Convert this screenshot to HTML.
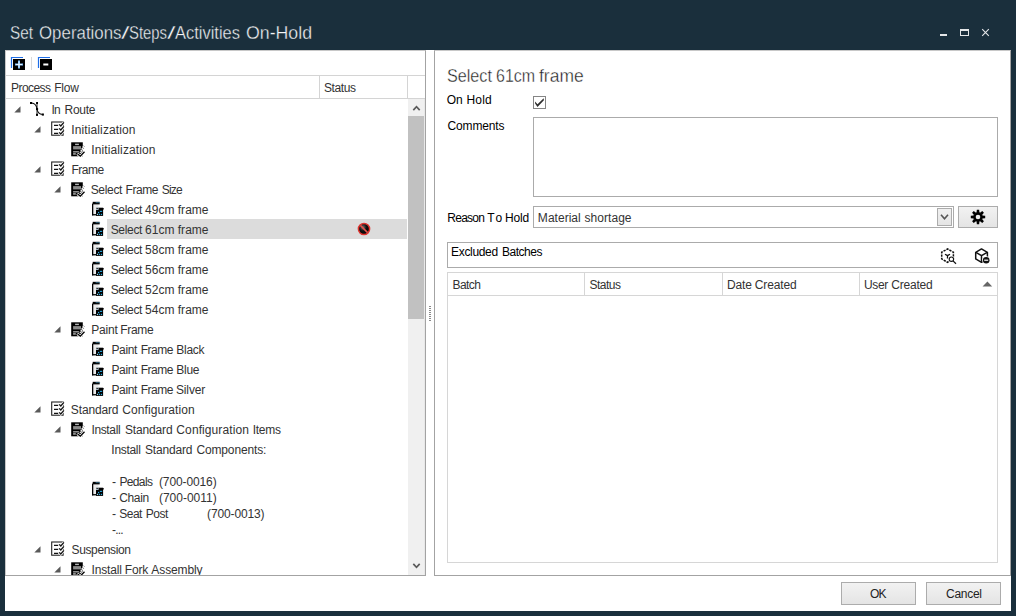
<!DOCTYPE html>
<html><head><meta charset="utf-8"><title>Set Operations/Steps/Activities On-Hold</title>
<style>
html,body{margin:0;padding:0}
body{width:1016px;height:616px;background:#1a2f3c;position:relative;overflow:hidden;font-family:"Liberation Sans", Arial, sans-serif}
.a{position:absolute;box-sizing:border-box}
.t{position:absolute;white-space:pre;font-family:"Liberation Sans", Arial, sans-serif}
.i{position:absolute;overflow:visible}
.g{margin:0;padding:0;height:0;font-size:0;line-height:0}
</style></head><body>
<div class="a" style="left:5px;top:50px;width:1006px;height:561px;background:#fff"></div>
<div class="a" style="left:0;top:0;width:1016px;height:575px;overflow:hidden">
<div class="a" style="left:5px;top:50px;width:421px;height:526px;border:1px solid #a3a3a3;border-top-color:#c8c8c8;border-left-color:#c8c8c8;background:#fff"></div>
<div class="a" style="left:31px;top:57px;width:1px;height:13px;background:#d9d9d9"></div>
<div class="a" style="left:6px;top:75px;width:419px;height:1px;background:#d4d4d4"></div>
<div class="a" style="left:6px;top:98px;width:419px;height:1px;background:#d4d4d4"></div>
<div class="a" style="left:319px;top:76px;width:1px;height:22px;background:#d4d4d4"></div>
<div class="a" style="left:407px;top:76px;width:1px;height:22px;background:#d4d4d4"></div>
<div class="a" style="left:107px;top:219px;width:300px;height:20px;background:#dcdcdc"></div>
<div class="a" style="left:408px;top:99px;width:16px;height:476px;background:#f0f0f0"></div>
<div class="a" style="left:408px;top:116px;width:16px;height:203px;background:#c1c1c1"></div>
<div class="a" style="left:424px;top:99px;width:1px;height:476px;background:#e8e8e8"></div>
<div class="a" style="left:429px;top:306px;width:2px;height:1px;background:#8a8a8a"></div>
<div class="a" style="left:429px;top:308px;width:2px;height:1px;background:#8a8a8a"></div>
<div class="a" style="left:429px;top:310px;width:2px;height:1px;background:#8a8a8a"></div>
<div class="a" style="left:429px;top:312px;width:2px;height:1px;background:#8a8a8a"></div>
<div class="a" style="left:429px;top:314px;width:2px;height:1px;background:#8a8a8a"></div>
<div class="a" style="left:429px;top:316px;width:2px;height:1px;background:#8a8a8a"></div>
<div class="a" style="left:429px;top:318px;width:2px;height:1px;background:#8a8a8a"></div>
<div class="a" style="left:429px;top:320px;width:2px;height:1px;background:#8a8a8a"></div>
<div class="a" style="left:434px;top:50px;width:577px;height:526px;border:1px solid #a3a3a3;border-top-color:#c8c8c8;background:#fff"></div>
<div class="a" style="left:533px;top:96px;width:13px;height:13px;border:1px solid #858585;background:#fff"></div>
<div class="a" style="left:533px;top:117px;width:465px;height:80px;border:1px solid #ababab;background:#fff"></div>
<div class="a" style="left:533px;top:206px;width:421px;height:22px;border:1px solid #ababab;background:#fff"></div>
<div class="a" style="left:937px;top:208px;width:15px;height:18px;border:1px solid #acacac;background:linear-gradient(#f0f0f0,#e5e5e5)"></div>
<div class="a" style="left:958px;top:206px;width:40px;height:22px;border:1px solid #acacac;background:linear-gradient(#f2f2f2,#e4e4e4)"></div>
<div class="a" style="left:447px;top:242px;width:551px;height:26px;border:1px solid #ababab;background:#fff"></div>
<div class="a" style="left:447px;top:272px;width:551px;height:291px;border:1px solid #d6d6d6;background:#fff"></div>
<div class="a" style="left:448px;top:295px;width:549px;height:1px;background:#d6d6d6"></div>
<div class="a" style="left:584px;top:273px;width:1px;height:22px;background:#d6d6d6"></div>
<div class="a" style="left:722px;top:273px;width:1px;height:22px;background:#d6d6d6"></div>
<div class="a" style="left:859px;top:273px;width:1px;height:22px;background:#d6d6d6"></div>
<div class="a" style="left:940px;top:34px;width:7px;height:2px;background:#e4e6e8"></div>
<div class="a" style="left:960px;top:29px;width:9px;height:7px;border:1px solid #e4e6e8;border-top-width:2px"></div>
<svg class="i" style="left:13.7px;top:105.6px" width="7" height="7" viewBox="0 0 7 7"><path d="M6.5 0.3V6.5H0.3Z" fill="#595959"/></svg>
<svg class="i" style="left:30px;top:102px" width="14" height="14" viewBox="0 0 14 14"><g fill="none" stroke="#111" stroke-width="1.15"><path d="M1.5 1C4.6 1.3 6.6 3.6 7 7"/><path d="M7 1V13" stroke-width="0.9"/><path d="M7 7C7.4 10.2 9.6 12.2 12.6 12.5"/></g><g fill="#000"><rect x="0" y="0" width="2.1" height="2"/><rect x="6.1" y="0" width="1.9" height="2"/><rect x="6" y="6.1" width="2.1" height="1.9"/><rect x="6" y="11.8" width="2" height="2.1"/><rect x="11.8" y="11.5" width="2.1" height="2.1"/></g></svg>
<svg class="i" style="left:33.7px;top:125.6px" width="7" height="7" viewBox="0 0 7 7"><path d="M6.5 0.3V6.5H0.3Z" fill="#595959"/></svg>
<svg class="i" style="left:50.5px;top:120.6px" width="14" height="15" viewBox="0 -0.5 14 15"><rect x="0.7" y="0.5" width="11.4" height="13.2" fill="#fff" stroke="#222" stroke-width="1.1"/><g stroke="#111" stroke-width="1.1" fill="none"><path d="M3 3.9H7.3M3 7.9H7.3M3 11.9H7.3"/></g><g stroke="#fff" stroke-width="2.6" fill="none"><path d="M8.2 2.9L9.8 4.5L12.9 0.8M8.2 6.9L9.8 8.5L12.9 4.8M8.2 10.9L9.8 12.5L12.9 8.8"/></g><g stroke="#111" stroke-width="1.3" fill="none"><path d="M8.2 2.9L9.8 4.5L12.9 0.8M8.2 6.9L9.8 8.5L12.9 4.8M8.2 10.9L9.8 12.5L12.9 8.8"/></g></svg>
<svg class="i" style="left:71px;top:141.5px" width="14" height="15" viewBox="0 0 14 15"><rect x="0.2" y="0.3" width="11.6" height="14" fill="#000"/><rect x="4.1" y="1.7" width="3.8" height="1.4" fill="#b5b5b5"/><rect x="2.1" y="4.1" width="7.9" height="3.3" fill="#8a8a8a"/><rect x="2.1" y="9.3" width="5.8" height="1.1" fill="#cfcfcf"/><rect x="2.1" y="11.4" width="2.7" height="1.1" fill="#f0f0f0"/><path d="M13.1 4L9.4 10.9" stroke="#fff" stroke-width="2.2" fill="none"/><path d="M13.1 4L9.4 10.9" stroke="#000" stroke-width="2.2" fill="none" stroke-dasharray="0.7 1.5" stroke-dashoffset="0.3" opacity="0.75"/><path d="M6.3 11.7L9.3 14.3L13.9 9.4" stroke="#fff" stroke-width="2.8" fill="none"/><path d="M6.6 12L9.3 14.1L13.5 9.8" stroke="#000" stroke-width="1.3" fill="none"/></svg>
<svg class="i" style="left:33.7px;top:165.6px" width="7" height="7" viewBox="0 0 7 7"><path d="M6.5 0.3V6.5H0.3Z" fill="#595959"/></svg>
<svg class="i" style="left:50.5px;top:160.6px" width="14" height="15" viewBox="0 -0.5 14 15"><rect x="0.7" y="0.5" width="11.4" height="13.2" fill="#fff" stroke="#222" stroke-width="1.1"/><g stroke="#111" stroke-width="1.1" fill="none"><path d="M3 3.9H7.3M3 7.9H7.3M3 11.9H7.3"/></g><g stroke="#fff" stroke-width="2.6" fill="none"><path d="M8.2 2.9L9.8 4.5L12.9 0.8M8.2 6.9L9.8 8.5L12.9 4.8M8.2 10.9L9.8 12.5L12.9 8.8"/></g><g stroke="#111" stroke-width="1.3" fill="none"><path d="M8.2 2.9L9.8 4.5L12.9 0.8M8.2 6.9L9.8 8.5L12.9 4.8M8.2 10.9L9.8 12.5L12.9 8.8"/></g></svg>
<svg class="i" style="left:53.7px;top:185.6px" width="7" height="7" viewBox="0 0 7 7"><path d="M6.5 0.3V6.5H0.3Z" fill="#595959"/></svg>
<svg class="i" style="left:71px;top:181.5px" width="14" height="15" viewBox="0 0 14 15"><rect x="0.2" y="0.3" width="11.6" height="14" fill="#000"/><rect x="4.1" y="1.7" width="3.8" height="1.4" fill="#b5b5b5"/><rect x="2.1" y="4.1" width="7.9" height="3.3" fill="#8a8a8a"/><rect x="2.1" y="9.3" width="5.8" height="1.1" fill="#cfcfcf"/><rect x="2.1" y="11.4" width="2.7" height="1.1" fill="#f0f0f0"/><path d="M13.1 4L9.4 10.9" stroke="#fff" stroke-width="2.2" fill="none"/><path d="M13.1 4L9.4 10.9" stroke="#000" stroke-width="2.2" fill="none" stroke-dasharray="0.7 1.5" stroke-dashoffset="0.3" opacity="0.75"/><path d="M6.3 11.7L9.3 14.3L13.9 9.4" stroke="#fff" stroke-width="2.8" fill="none"/><path d="M6.6 12L9.3 14.1L13.5 9.8" stroke="#000" stroke-width="1.3" fill="none"/></svg>
<svg class="i" style="left:92px;top:201px" width="13" height="15" viewBox="0 0 13 15"><rect x="1.2" y="3.4" width="5.2" height="9.8" fill="#e9e9e9"/><rect x="0" y="2.6" width="1.3" height="11.8" fill="#000"/><rect x="0" y="13.1" width="4.5" height="1.3" fill="#000"/><rect x="0.7" y="0.8" width="7" height="2.6" fill="#000"/><rect x="3.6" y="1.2" width="4.6" height="0.9" fill="#5bbce8" opacity="0.55"/><rect x="4" y="6.7" width="7.1" height="8.2" fill="#000"/><rect x="4" y="6.6" width="2.6" height="2.2" fill="#d8ecf7"/><rect x="4.3" y="7.2" width="2" height="0.8" fill="#000"/><path d="M9.8 8.2L11.9 6.9V8.6Z" fill="#000"/><rect x="7.9" y="9.8" width="2.3" height="1.1" fill="#29abe2"/><rect x="6" y="10.9" width="1.2" height="1.2" fill="#29abe2"/><rect x="4.9" y="12.8" width="1.2" height="1.2" fill="#9ad8f3"/><rect x="6.9" y="12.8" width="1.2" height="1.2" fill="#29abe2"/><rect x="8.9" y="12.8" width="1.2" height="1.2" fill="#29abe2"/></svg>
<svg class="i" style="left:92px;top:221px" width="13" height="15" viewBox="0 0 13 15"><rect x="1.2" y="3.4" width="5.2" height="9.8" fill="#e9e9e9"/><rect x="0" y="2.6" width="1.3" height="11.8" fill="#000"/><rect x="0" y="13.1" width="4.5" height="1.3" fill="#000"/><rect x="0.7" y="0.8" width="7" height="2.6" fill="#000"/><rect x="3.6" y="1.2" width="4.6" height="0.9" fill="#5bbce8" opacity="0.55"/><rect x="4" y="6.7" width="7.1" height="8.2" fill="#000"/><rect x="4" y="6.6" width="2.6" height="2.2" fill="#d8ecf7"/><rect x="4.3" y="7.2" width="2" height="0.8" fill="#000"/><path d="M9.8 8.2L11.9 6.9V8.6Z" fill="#000"/><rect x="7.9" y="9.8" width="2.3" height="1.1" fill="#29abe2"/><rect x="6" y="10.9" width="1.2" height="1.2" fill="#29abe2"/><rect x="4.9" y="12.8" width="1.2" height="1.2" fill="#9ad8f3"/><rect x="6.9" y="12.8" width="1.2" height="1.2" fill="#29abe2"/><rect x="8.9" y="12.8" width="1.2" height="1.2" fill="#29abe2"/></svg>
<svg class="i" style="left:92px;top:241px" width="13" height="15" viewBox="0 0 13 15"><rect x="1.2" y="3.4" width="5.2" height="9.8" fill="#e9e9e9"/><rect x="0" y="2.6" width="1.3" height="11.8" fill="#000"/><rect x="0" y="13.1" width="4.5" height="1.3" fill="#000"/><rect x="0.7" y="0.8" width="7" height="2.6" fill="#000"/><rect x="3.6" y="1.2" width="4.6" height="0.9" fill="#5bbce8" opacity="0.55"/><rect x="4" y="6.7" width="7.1" height="8.2" fill="#000"/><rect x="4" y="6.6" width="2.6" height="2.2" fill="#d8ecf7"/><rect x="4.3" y="7.2" width="2" height="0.8" fill="#000"/><path d="M9.8 8.2L11.9 6.9V8.6Z" fill="#000"/><rect x="7.9" y="9.8" width="2.3" height="1.1" fill="#29abe2"/><rect x="6" y="10.9" width="1.2" height="1.2" fill="#29abe2"/><rect x="4.9" y="12.8" width="1.2" height="1.2" fill="#9ad8f3"/><rect x="6.9" y="12.8" width="1.2" height="1.2" fill="#29abe2"/><rect x="8.9" y="12.8" width="1.2" height="1.2" fill="#29abe2"/></svg>
<svg class="i" style="left:92px;top:261px" width="13" height="15" viewBox="0 0 13 15"><rect x="1.2" y="3.4" width="5.2" height="9.8" fill="#e9e9e9"/><rect x="0" y="2.6" width="1.3" height="11.8" fill="#000"/><rect x="0" y="13.1" width="4.5" height="1.3" fill="#000"/><rect x="0.7" y="0.8" width="7" height="2.6" fill="#000"/><rect x="3.6" y="1.2" width="4.6" height="0.9" fill="#5bbce8" opacity="0.55"/><rect x="4" y="6.7" width="7.1" height="8.2" fill="#000"/><rect x="4" y="6.6" width="2.6" height="2.2" fill="#d8ecf7"/><rect x="4.3" y="7.2" width="2" height="0.8" fill="#000"/><path d="M9.8 8.2L11.9 6.9V8.6Z" fill="#000"/><rect x="7.9" y="9.8" width="2.3" height="1.1" fill="#29abe2"/><rect x="6" y="10.9" width="1.2" height="1.2" fill="#29abe2"/><rect x="4.9" y="12.8" width="1.2" height="1.2" fill="#9ad8f3"/><rect x="6.9" y="12.8" width="1.2" height="1.2" fill="#29abe2"/><rect x="8.9" y="12.8" width="1.2" height="1.2" fill="#29abe2"/></svg>
<svg class="i" style="left:92px;top:281px" width="13" height="15" viewBox="0 0 13 15"><rect x="1.2" y="3.4" width="5.2" height="9.8" fill="#e9e9e9"/><rect x="0" y="2.6" width="1.3" height="11.8" fill="#000"/><rect x="0" y="13.1" width="4.5" height="1.3" fill="#000"/><rect x="0.7" y="0.8" width="7" height="2.6" fill="#000"/><rect x="3.6" y="1.2" width="4.6" height="0.9" fill="#5bbce8" opacity="0.55"/><rect x="4" y="6.7" width="7.1" height="8.2" fill="#000"/><rect x="4" y="6.6" width="2.6" height="2.2" fill="#d8ecf7"/><rect x="4.3" y="7.2" width="2" height="0.8" fill="#000"/><path d="M9.8 8.2L11.9 6.9V8.6Z" fill="#000"/><rect x="7.9" y="9.8" width="2.3" height="1.1" fill="#29abe2"/><rect x="6" y="10.9" width="1.2" height="1.2" fill="#29abe2"/><rect x="4.9" y="12.8" width="1.2" height="1.2" fill="#9ad8f3"/><rect x="6.9" y="12.8" width="1.2" height="1.2" fill="#29abe2"/><rect x="8.9" y="12.8" width="1.2" height="1.2" fill="#29abe2"/></svg>
<svg class="i" style="left:92px;top:301px" width="13" height="15" viewBox="0 0 13 15"><rect x="1.2" y="3.4" width="5.2" height="9.8" fill="#e9e9e9"/><rect x="0" y="2.6" width="1.3" height="11.8" fill="#000"/><rect x="0" y="13.1" width="4.5" height="1.3" fill="#000"/><rect x="0.7" y="0.8" width="7" height="2.6" fill="#000"/><rect x="3.6" y="1.2" width="4.6" height="0.9" fill="#5bbce8" opacity="0.55"/><rect x="4" y="6.7" width="7.1" height="8.2" fill="#000"/><rect x="4" y="6.6" width="2.6" height="2.2" fill="#d8ecf7"/><rect x="4.3" y="7.2" width="2" height="0.8" fill="#000"/><path d="M9.8 8.2L11.9 6.9V8.6Z" fill="#000"/><rect x="7.9" y="9.8" width="2.3" height="1.1" fill="#29abe2"/><rect x="6" y="10.9" width="1.2" height="1.2" fill="#29abe2"/><rect x="4.9" y="12.8" width="1.2" height="1.2" fill="#9ad8f3"/><rect x="6.9" y="12.8" width="1.2" height="1.2" fill="#29abe2"/><rect x="8.9" y="12.8" width="1.2" height="1.2" fill="#29abe2"/></svg>
<svg class="i" style="left:53.7px;top:325.6px" width="7" height="7" viewBox="0 0 7 7"><path d="M6.5 0.3V6.5H0.3Z" fill="#595959"/></svg>
<svg class="i" style="left:71px;top:321.5px" width="14" height="15" viewBox="0 0 14 15"><rect x="0.2" y="0.3" width="11.6" height="14" fill="#000"/><rect x="4.1" y="1.7" width="3.8" height="1.4" fill="#b5b5b5"/><rect x="2.1" y="4.1" width="7.9" height="3.3" fill="#8a8a8a"/><rect x="2.1" y="9.3" width="5.8" height="1.1" fill="#cfcfcf"/><rect x="2.1" y="11.4" width="2.7" height="1.1" fill="#f0f0f0"/><path d="M13.1 4L9.4 10.9" stroke="#fff" stroke-width="2.2" fill="none"/><path d="M13.1 4L9.4 10.9" stroke="#000" stroke-width="2.2" fill="none" stroke-dasharray="0.7 1.5" stroke-dashoffset="0.3" opacity="0.75"/><path d="M6.3 11.7L9.3 14.3L13.9 9.4" stroke="#fff" stroke-width="2.8" fill="none"/><path d="M6.6 12L9.3 14.1L13.5 9.8" stroke="#000" stroke-width="1.3" fill="none"/></svg>
<svg class="i" style="left:92px;top:341px" width="13" height="15" viewBox="0 0 13 15"><rect x="1.2" y="3.4" width="5.2" height="9.8" fill="#e9e9e9"/><rect x="0" y="2.6" width="1.3" height="11.8" fill="#000"/><rect x="0" y="13.1" width="4.5" height="1.3" fill="#000"/><rect x="0.7" y="0.8" width="7" height="2.6" fill="#000"/><rect x="3.6" y="1.2" width="4.6" height="0.9" fill="#5bbce8" opacity="0.55"/><rect x="4" y="6.7" width="7.1" height="8.2" fill="#000"/><rect x="4" y="6.6" width="2.6" height="2.2" fill="#d8ecf7"/><rect x="4.3" y="7.2" width="2" height="0.8" fill="#000"/><path d="M9.8 8.2L11.9 6.9V8.6Z" fill="#000"/><rect x="7.9" y="9.8" width="2.3" height="1.1" fill="#29abe2"/><rect x="6" y="10.9" width="1.2" height="1.2" fill="#29abe2"/><rect x="4.9" y="12.8" width="1.2" height="1.2" fill="#9ad8f3"/><rect x="6.9" y="12.8" width="1.2" height="1.2" fill="#29abe2"/><rect x="8.9" y="12.8" width="1.2" height="1.2" fill="#29abe2"/></svg>
<svg class="i" style="left:92px;top:361px" width="13" height="15" viewBox="0 0 13 15"><rect x="1.2" y="3.4" width="5.2" height="9.8" fill="#e9e9e9"/><rect x="0" y="2.6" width="1.3" height="11.8" fill="#000"/><rect x="0" y="13.1" width="4.5" height="1.3" fill="#000"/><rect x="0.7" y="0.8" width="7" height="2.6" fill="#000"/><rect x="3.6" y="1.2" width="4.6" height="0.9" fill="#5bbce8" opacity="0.55"/><rect x="4" y="6.7" width="7.1" height="8.2" fill="#000"/><rect x="4" y="6.6" width="2.6" height="2.2" fill="#d8ecf7"/><rect x="4.3" y="7.2" width="2" height="0.8" fill="#000"/><path d="M9.8 8.2L11.9 6.9V8.6Z" fill="#000"/><rect x="7.9" y="9.8" width="2.3" height="1.1" fill="#29abe2"/><rect x="6" y="10.9" width="1.2" height="1.2" fill="#29abe2"/><rect x="4.9" y="12.8" width="1.2" height="1.2" fill="#9ad8f3"/><rect x="6.9" y="12.8" width="1.2" height="1.2" fill="#29abe2"/><rect x="8.9" y="12.8" width="1.2" height="1.2" fill="#29abe2"/></svg>
<svg class="i" style="left:92px;top:381px" width="13" height="15" viewBox="0 0 13 15"><rect x="1.2" y="3.4" width="5.2" height="9.8" fill="#e9e9e9"/><rect x="0" y="2.6" width="1.3" height="11.8" fill="#000"/><rect x="0" y="13.1" width="4.5" height="1.3" fill="#000"/><rect x="0.7" y="0.8" width="7" height="2.6" fill="#000"/><rect x="3.6" y="1.2" width="4.6" height="0.9" fill="#5bbce8" opacity="0.55"/><rect x="4" y="6.7" width="7.1" height="8.2" fill="#000"/><rect x="4" y="6.6" width="2.6" height="2.2" fill="#d8ecf7"/><rect x="4.3" y="7.2" width="2" height="0.8" fill="#000"/><path d="M9.8 8.2L11.9 6.9V8.6Z" fill="#000"/><rect x="7.9" y="9.8" width="2.3" height="1.1" fill="#29abe2"/><rect x="6" y="10.9" width="1.2" height="1.2" fill="#29abe2"/><rect x="4.9" y="12.8" width="1.2" height="1.2" fill="#9ad8f3"/><rect x="6.9" y="12.8" width="1.2" height="1.2" fill="#29abe2"/><rect x="8.9" y="12.8" width="1.2" height="1.2" fill="#29abe2"/></svg>
<svg class="i" style="left:33.7px;top:405.6px" width="7" height="7" viewBox="0 0 7 7"><path d="M6.5 0.3V6.5H0.3Z" fill="#595959"/></svg>
<svg class="i" style="left:50.5px;top:400.6px" width="14" height="15" viewBox="0 -0.5 14 15"><rect x="0.7" y="0.5" width="11.4" height="13.2" fill="#fff" stroke="#222" stroke-width="1.1"/><g stroke="#111" stroke-width="1.1" fill="none"><path d="M3 3.9H7.3M3 7.9H7.3M3 11.9H7.3"/></g><g stroke="#fff" stroke-width="2.6" fill="none"><path d="M8.2 2.9L9.8 4.5L12.9 0.8M8.2 6.9L9.8 8.5L12.9 4.8M8.2 10.9L9.8 12.5L12.9 8.8"/></g><g stroke="#111" stroke-width="1.3" fill="none"><path d="M8.2 2.9L9.8 4.5L12.9 0.8M8.2 6.9L9.8 8.5L12.9 4.8M8.2 10.9L9.8 12.5L12.9 8.8"/></g></svg>
<svg class="i" style="left:53.7px;top:425.6px" width="7" height="7" viewBox="0 0 7 7"><path d="M6.5 0.3V6.5H0.3Z" fill="#595959"/></svg>
<svg class="i" style="left:71px;top:421.5px" width="14" height="15" viewBox="0 0 14 15"><rect x="0.2" y="0.3" width="11.6" height="14" fill="#000"/><rect x="4.1" y="1.7" width="3.8" height="1.4" fill="#b5b5b5"/><rect x="2.1" y="4.1" width="7.9" height="3.3" fill="#8a8a8a"/><rect x="2.1" y="9.3" width="5.8" height="1.1" fill="#cfcfcf"/><rect x="2.1" y="11.4" width="2.7" height="1.1" fill="#f0f0f0"/><path d="M13.1 4L9.4 10.9" stroke="#fff" stroke-width="2.2" fill="none"/><path d="M13.1 4L9.4 10.9" stroke="#000" stroke-width="2.2" fill="none" stroke-dasharray="0.7 1.5" stroke-dashoffset="0.3" opacity="0.75"/><path d="M6.3 11.7L9.3 14.3L13.9 9.4" stroke="#fff" stroke-width="2.8" fill="none"/><path d="M6.6 12L9.3 14.1L13.5 9.8" stroke="#000" stroke-width="1.3" fill="none"/></svg>
<svg class="i" style="left:92px;top:481px" width="13" height="15" viewBox="0 0 13 15"><rect x="1.2" y="3.4" width="5.2" height="9.8" fill="#e9e9e9"/><rect x="0" y="2.6" width="1.3" height="11.8" fill="#000"/><rect x="0" y="13.1" width="4.5" height="1.3" fill="#000"/><rect x="0.7" y="0.8" width="7" height="2.6" fill="#000"/><rect x="3.6" y="1.2" width="4.6" height="0.9" fill="#5bbce8" opacity="0.55"/><rect x="4" y="6.7" width="7.1" height="8.2" fill="#000"/><rect x="4" y="6.6" width="2.6" height="2.2" fill="#d8ecf7"/><rect x="4.3" y="7.2" width="2" height="0.8" fill="#000"/><path d="M9.8 8.2L11.9 6.9V8.6Z" fill="#000"/><rect x="7.9" y="9.8" width="2.3" height="1.1" fill="#29abe2"/><rect x="6" y="10.9" width="1.2" height="1.2" fill="#29abe2"/><rect x="4.9" y="12.8" width="1.2" height="1.2" fill="#9ad8f3"/><rect x="6.9" y="12.8" width="1.2" height="1.2" fill="#29abe2"/><rect x="8.9" y="12.8" width="1.2" height="1.2" fill="#29abe2"/></svg>
<svg class="i" style="left:33.7px;top:545.6px" width="7" height="7" viewBox="0 0 7 7"><path d="M6.5 0.3V6.5H0.3Z" fill="#595959"/></svg>
<svg class="i" style="left:50.5px;top:540.6px" width="14" height="15" viewBox="0 -0.5 14 15"><rect x="0.7" y="0.5" width="11.4" height="13.2" fill="#fff" stroke="#222" stroke-width="1.1"/><g stroke="#111" stroke-width="1.1" fill="none"><path d="M3 3.9H7.3M3 7.9H7.3M3 11.9H7.3"/></g><g stroke="#fff" stroke-width="2.6" fill="none"><path d="M8.2 2.9L9.8 4.5L12.9 0.8M8.2 6.9L9.8 8.5L12.9 4.8M8.2 10.9L9.8 12.5L12.9 8.8"/></g><g stroke="#111" stroke-width="1.3" fill="none"><path d="M8.2 2.9L9.8 4.5L12.9 0.8M8.2 6.9L9.8 8.5L12.9 4.8M8.2 10.9L9.8 12.5L12.9 8.8"/></g></svg>
<svg class="i" style="left:53.7px;top:565.6px" width="7" height="7" viewBox="0 0 7 7"><path d="M6.5 0.3V6.5H0.3Z" fill="#595959"/></svg>
<svg class="i" style="left:71px;top:561.5px" width="14" height="15" viewBox="0 0 14 15"><rect x="0.2" y="0.3" width="11.6" height="14" fill="#000"/><rect x="4.1" y="1.7" width="3.8" height="1.4" fill="#b5b5b5"/><rect x="2.1" y="4.1" width="7.9" height="3.3" fill="#8a8a8a"/><rect x="2.1" y="9.3" width="5.8" height="1.1" fill="#cfcfcf"/><rect x="2.1" y="11.4" width="2.7" height="1.1" fill="#f0f0f0"/><path d="M13.1 4L9.4 10.9" stroke="#fff" stroke-width="2.2" fill="none"/><path d="M13.1 4L9.4 10.9" stroke="#000" stroke-width="2.2" fill="none" stroke-dasharray="0.7 1.5" stroke-dashoffset="0.3" opacity="0.75"/><path d="M6.3 11.7L9.3 14.3L13.9 9.4" stroke="#fff" stroke-width="2.8" fill="none"/><path d="M6.6 12L9.3 14.1L13.5 9.8" stroke="#000" stroke-width="1.3" fill="none"/></svg>
<svg class="i" style="left:356.5px;top:222px" width="14" height="14" viewBox="0 0 14 14"><defs><radialGradient id="rg" cx="0.4" cy="0.35" r="0.7"><stop offset="0" stop-color="#777"/><stop offset="0.45" stop-color="#111"/><stop offset="1" stop-color="#000"/></radialGradient></defs><circle cx="7" cy="7" r="5.6" fill="url(#rg)" stroke="#e0342f" stroke-width="1.5"/><path d="M3.4 3.4L10.6 10.6" stroke="#e8534c" stroke-width="1.5"/></svg>
<svg class="i" style="left:11px;top:57px" width="14" height="13" viewBox="0 0 14 13"><path d="M0.5 11V0.5H12" stroke="#1e6ee8" stroke-width="1.2" fill="none"/><rect x="2" y="2" width="12" height="11" fill="#000"/><path d="M4 7.5H12M8 3.6V11.4" stroke="#7fc0ff" stroke-width="2"/><path d="M5 7.5H11M8 4.6V10.4" stroke="#e6f3ff" stroke-width="1"/></svg>
<svg class="i" style="left:38px;top:57px" width="14" height="13" viewBox="0 0 14 13"><path d="M0.5 11V0.5H12" stroke="#1e6ee8" stroke-width="1.2" fill="none"/><rect x="2" y="2" width="12" height="11" fill="#000"/><rect x="5.3" y="6.5" width="5" height="2" fill="#fff"/></svg>
<svg class="i" style="left:969.9px;top:208.9px" width="16" height="16" viewBox="0 0 16 16"><g transform="translate(8 8)" fill="#000"><path d="M-1.5 -4L-1.15 -7.2H1.15L1.5 -4Z" transform="rotate(0)"/><path d="M-1.5 -4L-1.15 -7.2H1.15L1.5 -4Z" transform="rotate(45)"/><path d="M-1.5 -4L-1.15 -7.2H1.15L1.5 -4Z" transform="rotate(90)"/><path d="M-1.5 -4L-1.15 -7.2H1.15L1.5 -4Z" transform="rotate(135)"/><path d="M-1.5 -4L-1.15 -7.2H1.15L1.5 -4Z" transform="rotate(180)"/><path d="M-1.5 -4L-1.15 -7.2H1.15L1.5 -4Z" transform="rotate(225)"/><path d="M-1.5 -4L-1.15 -7.2H1.15L1.5 -4Z" transform="rotate(270)"/><path d="M-1.5 -4L-1.15 -7.2H1.15L1.5 -4Z" transform="rotate(315)"/><circle r="4.7"/><circle r="2.3" fill="#ebebeb"/></g></svg>
<svg class="i" style="left:941px;top:247.8px" width="16" height="17" viewBox="0 0 16 17"><g fill="none" stroke="#111" stroke-width="1.5"><path d="M6.5 0.9L12.4 4.3V10.9L6.5 14.3L0.7 10.9V4.3Z" stroke-dasharray="2.35 1" stroke-dashoffset="1.17"/><path d="M6.5 7.6V10.6M6.5 7.6L4 6.2M6.5 7.6L9 6.2" stroke-width="1.3"/></g><circle cx="10.4" cy="11.2" r="3.1" fill="#fff"/><circle cx="10.4" cy="11.2" r="2.2" fill="#fff" stroke="#111" stroke-width="1.1"/><path d="M12 12.9L15 15.8" stroke="#111" stroke-width="1.3"/></svg>
<svg class="i" style="left:975.2px;top:247.8px" width="16" height="17" viewBox="0 0 16 17"><g fill="none" stroke="#111" stroke-width="1.5" stroke-linejoin="round"><path d="M6.5 0.9L12.4 4.3V10.9L6.5 14.3L0.7 10.9V4.3Z"/><path d="M6.5 7.6V14.3M6.5 7.6L0.9 4.4M6.5 7.6L12.2 4.4"/></g><circle cx="11.2" cy="12.2" r="3.9" fill="#fff"/><circle cx="11.2" cy="12.2" r="3.3" fill="#111"/><rect x="9.2" y="11.6" width="4" height="1.2" fill="#fff"/></svg>
<svg class="i" style="left:982px;top:29px" width="7" height="7" viewBox="0 0 7 7"><path d="M0.2 0.2L6.8 6.8M6.8 0.2L0.2 6.8" stroke="#e4e6e8" stroke-width="1.1"/></svg>
<svg class="i" style="left:412px;top:105px" width="9" height="6" viewBox="0 0 9 6"><path d="M1.3 5.1L4.5 1.7L7.7 5.1" stroke="#5a5a5a" stroke-width="1.7" fill="none"/></svg>
<svg class="i" style="left:412px;top:563px" width="9" height="6" viewBox="0 0 9 6"><path d="M1.3 0.9L4.5 4.3L7.7 0.9" stroke="#5a5a5a" stroke-width="1.7" fill="none"/></svg>
<svg class="i" style="left:940px;top:214px" width="9" height="6" viewBox="0 0 9 6"><path d="M1 0.8L4.5 4.8L8 0.8" stroke="#555" stroke-width="1.6" fill="none"/></svg>
<svg class="i" style="left:534px;top:97px" width="11" height="11" viewBox="0 0 11 11"><path d="M1.1 4.5L3.5 7.2L9.7 1.2L9.9 3.3L3.5 9.9L1.1 6.5Z" fill="#2e2e2e"/></svg>
<svg class="i" style="left:982px;top:281px" width="11" height="6" viewBox="0 0 11 6"><path d="M0.6 5.4L5.4 0.6L10.2 5.4Z" fill="#666"/></svg>
<div class="g"><span class="t" style="left:10.00px;top:20.00px;font-size:18px;line-height:27px;letter-spacing:0.000px;color:#f4f6f7;-webkit-text-stroke:0.35px #1a2f3c;transform:scaleX(0.851);transform-origin:0 0;">Set</span> <span class="t" style="left:38.50px;top:20.00px;font-size:18px;line-height:27px;letter-spacing:0.000px;color:#f4f6f7;-webkit-text-stroke:0.35px #1a2f3c;transform:scaleX(0.937);transform-origin:0 0;">Operations</span><span class="t" style="left:120.80px;top:20.00px;font-size:18px;line-height:27px;letter-spacing:0.000px;color:#f4f6f7;-webkit-text-stroke:0.35px #1a2f3c;transform:scaleX(1.715);transform-origin:0 0;">/</span><span class="t" style="left:129.30px;top:20.00px;font-size:18px;line-height:27px;letter-spacing:0.000px;color:#f4f6f7;-webkit-text-stroke:0.35px #1a2f3c;transform:scaleX(0.826);transform-origin:0 0;">Steps</span><span class="t" style="left:167.20px;top:20.00px;font-size:18px;line-height:27px;letter-spacing:0.000px;color:#f4f6f7;-webkit-text-stroke:0.35px #1a2f3c;transform:scaleX(1.715);transform-origin:0 0;">/</span><span class="t" style="left:175.20px;top:20.00px;font-size:18px;line-height:27px;letter-spacing:0.000px;color:#f4f6f7;-webkit-text-stroke:0.35px #1a2f3c;transform:scaleX(0.915);transform-origin:0 0;">Activities</span> <span class="t" style="left:246.00px;top:20.00px;font-size:18px;line-height:27px;letter-spacing:0.000px;color:#f4f6f7;-webkit-text-stroke:0.35px #1a2f3c;transform:scaleX(0.985);transform-origin:0 0;">On-Hold</span></div>
<div class="g"><span class="t" style="left:11.06px;top:78.80px;font-size:12px;line-height:18px;letter-spacing:-0.580px;color:#333;">Process</span> <span class="t" style="left:54.16px;top:78.80px;font-size:12px;line-height:18px;letter-spacing:-0.221px;color:#333;">Flow</span></div>
<div class="g"><span class="t" style="left:324.00px;top:78.80px;font-size:12px;line-height:18px;letter-spacing:-0.406px;color:#333;">Status</span></div>
<div class="g"><span class="t" style="left:51.46px;top:101.00px;font-size:12px;line-height:18px;letter-spacing:-0.836px;color:#333;">In</span> <span class="t" style="left:64.46px;top:101.00px;font-size:12px;line-height:18px;letter-spacing:-0.238px;color:#333;">Route</span></div>
<div class="g"><span class="t" style="left:71.21px;top:121.00px;font-size:12px;line-height:18px;letter-spacing:0.125px;color:#333;">Initialization</span></div>
<div class="g"><span class="t" style="left:91.21px;top:141.00px;font-size:12px;line-height:18px;letter-spacing:0.125px;color:#333;">Initialization</span></div>
<div class="g"><span class="t" style="left:71.46px;top:161.00px;font-size:12px;line-height:18px;letter-spacing:-0.460px;color:#333;">Frame</span></div>
<div class="g"><span class="t" style="left:90.66px;top:181.00px;font-size:12px;line-height:18px;letter-spacing:-0.316px;color:#333;">Select</span> <span class="t" style="left:125.56px;top:181.00px;font-size:12px;line-height:18px;letter-spacing:-0.423px;color:#333;">Frame</span> <span class="t" style="left:161.76px;top:181.00px;font-size:12px;line-height:18px;letter-spacing:-0.821px;color:#333;">Size</span></div>
<div class="g"><span class="t" style="left:110.66px;top:201.00px;font-size:12px;line-height:18px;letter-spacing:-0.316px;color:#333;">Select</span> <span class="t" style="left:144.96px;top:201.00px;font-size:12px;line-height:18px;letter-spacing:0.079px;color:#333;">49cm</span> <span class="t" style="left:177.76px;top:201.00px;font-size:12px;line-height:18px;letter-spacing:0.023px;color:#333;">frame</span></div>
<div class="g"><span class="t" style="left:110.66px;top:221.00px;font-size:12px;line-height:18px;letter-spacing:-0.316px;color:#333;">Select</span> <span class="t" style="left:144.96px;top:221.00px;font-size:12px;line-height:18px;letter-spacing:0.079px;color:#333;">61cm</span> <span class="t" style="left:177.76px;top:221.00px;font-size:12px;line-height:18px;letter-spacing:0.023px;color:#333;">frame</span></div>
<div class="g"><span class="t" style="left:110.66px;top:241.00px;font-size:12px;line-height:18px;letter-spacing:-0.316px;color:#333;">Select</span> <span class="t" style="left:144.96px;top:241.00px;font-size:12px;line-height:18px;letter-spacing:0.079px;color:#333;">58cm</span> <span class="t" style="left:177.76px;top:241.00px;font-size:12px;line-height:18px;letter-spacing:0.023px;color:#333;">frame</span></div>
<div class="g"><span class="t" style="left:110.66px;top:261.00px;font-size:12px;line-height:18px;letter-spacing:-0.316px;color:#333;">Select</span> <span class="t" style="left:144.96px;top:261.00px;font-size:12px;line-height:18px;letter-spacing:0.079px;color:#333;">56cm</span> <span class="t" style="left:177.76px;top:261.00px;font-size:12px;line-height:18px;letter-spacing:0.023px;color:#333;">frame</span></div>
<div class="g"><span class="t" style="left:110.66px;top:281.00px;font-size:12px;line-height:18px;letter-spacing:-0.316px;color:#333;">Select</span> <span class="t" style="left:144.96px;top:281.00px;font-size:12px;line-height:18px;letter-spacing:0.079px;color:#333;">52cm</span> <span class="t" style="left:177.76px;top:281.00px;font-size:12px;line-height:18px;letter-spacing:0.023px;color:#333;">frame</span></div>
<div class="g"><span class="t" style="left:110.66px;top:301.00px;font-size:12px;line-height:18px;letter-spacing:-0.316px;color:#333;">Select</span> <span class="t" style="left:144.96px;top:301.00px;font-size:12px;line-height:18px;letter-spacing:0.079px;color:#333;">54cm</span> <span class="t" style="left:177.76px;top:301.00px;font-size:12px;line-height:18px;letter-spacing:0.023px;color:#333;">frame</span></div>
<div class="g"><span class="t" style="left:91.26px;top:321.00px;font-size:12px;line-height:18px;letter-spacing:-0.220px;color:#333;">Paint</span> <span class="t" style="left:120.26px;top:321.00px;font-size:12px;line-height:18px;letter-spacing:-0.323px;color:#333;">Frame</span></div>
<div class="g"><span class="t" style="left:111.46px;top:341.00px;font-size:12px;line-height:18px;letter-spacing:-0.345px;color:#333;">Paint</span> <span class="t" style="left:140.66px;top:341.00px;font-size:12px;line-height:18px;letter-spacing:-0.498px;color:#333;">Frame</span> <span class="t" style="left:176.36px;top:341.00px;font-size:12px;line-height:18px;letter-spacing:-0.316px;color:#333;">Black</span></div>
<div class="g"><span class="t" style="left:111.46px;top:361.00px;font-size:12px;line-height:18px;letter-spacing:-0.345px;color:#333;">Paint</span> <span class="t" style="left:140.66px;top:361.00px;font-size:12px;line-height:18px;letter-spacing:-0.498px;color:#333;">Frame</span> <span class="t" style="left:176.36px;top:361.00px;font-size:12px;line-height:18px;letter-spacing:-0.284px;color:#333;">Blue</span></div>
<div class="g"><span class="t" style="left:111.46px;top:381.00px;font-size:12px;line-height:18px;letter-spacing:-0.345px;color:#333;">Paint</span> <span class="t" style="left:140.66px;top:381.00px;font-size:12px;line-height:18px;letter-spacing:-0.498px;color:#333;">Frame</span> <span class="t" style="left:175.96px;top:381.00px;font-size:12px;line-height:18px;letter-spacing:-0.127px;color:#333;">Silver</span></div>
<div class="g"><span class="t" style="left:70.86px;top:401.00px;font-size:12px;line-height:18px;letter-spacing:-0.146px;color:#333;">Standard</span> <span class="t" style="left:122.16px;top:401.00px;font-size:12px;line-height:18px;letter-spacing:0.099px;color:#333;">Configuration</span></div>
<div class="g"><span class="t" style="left:91.46px;top:421.00px;font-size:12px;line-height:18px;letter-spacing:-0.363px;color:#333;">Install</span> <span class="t" style="left:124.96px;top:421.00px;font-size:12px;line-height:18px;letter-spacing:-0.146px;color:#333;">Standard</span> <span class="t" style="left:176.36px;top:421.00px;font-size:12px;line-height:18px;letter-spacing:0.091px;color:#333;">Configuration</span> <span class="t" style="left:252.76px;top:421.00px;font-size:12px;line-height:18px;letter-spacing:-0.291px;color:#333;">Items</span></div>
<div class="g"><span class="t" style="left:111.36px;top:441.00px;font-size:12px;line-height:18px;letter-spacing:-0.313px;color:#333;">Install</span> <span class="t" style="left:144.96px;top:441.00px;font-size:12px;line-height:18px;letter-spacing:-0.160px;color:#333;">Standard</span> <span class="t" style="left:196.46px;top:441.00px;font-size:12px;line-height:18px;letter-spacing:-0.149px;color:#333;">Components:</span></div>
<div class="g"><span class="t" style="left:111.56px;top:473.00px;font-size:12px;line-height:18px;letter-spacing:0.000px;color:#333;transform:scaleX(1.020);transform-origin:0 0;">-</span> <span class="t" style="left:119.46px;top:473.00px;font-size:12px;line-height:18px;letter-spacing:-0.645px;color:#333;">Pedals</span> <span class="t" style="left:158.96px;top:473.00px;font-size:12px;line-height:18px;letter-spacing:-0.115px;color:#333;">(700-0016)</span></div>
<div class="g"><span class="t" style="left:111.56px;top:489.00px;font-size:12px;line-height:18px;letter-spacing:0.000px;color:#333;transform:scaleX(1.020);transform-origin:0 0;">-</span> <span class="t" style="left:119.16px;top:489.00px;font-size:12px;line-height:18px;letter-spacing:-0.345px;color:#333;">Chain</span> <span class="t" style="left:158.96px;top:489.00px;font-size:12px;line-height:18px;letter-spacing:-0.016px;color:#333;">(700-0011)</span></div>
<div class="g"><span class="t" style="left:111.56px;top:505.00px;font-size:12px;line-height:18px;letter-spacing:0.000px;color:#333;transform:scaleX(1.020);transform-origin:0 0;">-</span> <span class="t" style="left:119.16px;top:505.00px;font-size:12px;line-height:18px;letter-spacing:-0.469px;color:#333;">Seat</span> <span class="t" style="left:145.76px;top:505.00px;font-size:12px;line-height:18px;letter-spacing:-0.512px;color:#333;">Post</span> <span class="t" style="left:207.06px;top:505.00px;font-size:12px;line-height:18px;letter-spacing:-0.127px;color:#333;">(700-0013)</span></div>
<div class="g"><span class="t" style="left:112.00px;top:521.00px;font-size:12px;line-height:18px;letter-spacing:-0.833px;color:#333;">-...</span></div>
<div class="g"><span class="t" style="left:71.50px;top:541.00px;font-size:12px;line-height:18px;letter-spacing:-0.358px;color:#333;">Suspension</span></div>
<div class="g"><span class="t" style="left:91.46px;top:561.00px;font-size:12px;line-height:18px;letter-spacing:-0.147px;color:#333;">Install</span> <span class="t" style="left:124.76px;top:561.00px;font-size:12px;line-height:18px;letter-spacing:-0.173px;color:#333;">Fork</span> <span class="t" style="left:151.36px;top:561.00px;font-size:12px;line-height:18px;letter-spacing:-0.119px;color:#333;">Assembly</span></div>
<div class="g"><span class="t" style="left:447.09px;top:63.00px;font-size:18px;line-height:27px;letter-spacing:0.000px;color:#1c1c1c;-webkit-text-stroke:0.35px #fff;transform:scaleX(0.898);transform-origin:0 0;">Select</span> <span class="t" style="left:495.89px;top:63.00px;font-size:18px;line-height:27px;letter-spacing:0.000px;color:#1c1c1c;-webkit-text-stroke:0.35px #fff;transform:scaleX(0.889);transform-origin:0 0;">61cm</span> <span class="t" style="left:538.69px;top:63.00px;font-size:18px;line-height:27px;letter-spacing:0.000px;color:#1c1c1c;-webkit-text-stroke:0.35px #fff;transform:scaleX(0.970);transform-origin:0 0;">frame</span></div>
<div class="g"><span class="t" style="left:446.86px;top:91.00px;font-size:12px;line-height:18px;letter-spacing:-0.136px;color:#000;">On</span> <span class="t" style="left:466.56px;top:91.00px;font-size:12px;line-height:18px;letter-spacing:0.131px;color:#000;">Hold</span></div>
<div class="g"><span class="t" style="left:447.50px;top:117.20px;font-size:12px;line-height:18px;letter-spacing:-0.145px;color:#000;">Comments</span></div>
<div class="g"><span class="t" style="left:447.36px;top:209.20px;font-size:12px;line-height:18px;letter-spacing:-0.779px;color:#000;">Reason</span> <span class="t" style="left:487.26px;top:209.20px;font-size:12px;line-height:18px;letter-spacing:2.193px;color:#000;">To</span> <span class="t" style="left:504.96px;top:209.20px;font-size:12px;line-height:18px;letter-spacing:-0.169px;color:#000;">Hold</span></div>
<div class="g"><span class="t" style="left:537.86px;top:209.20px;font-size:12px;line-height:18px;letter-spacing:0.028px;color:#333;">Material</span> <span class="t" style="left:584.56px;top:209.20px;font-size:12px;line-height:18px;letter-spacing:0.040px;color:#333;">shortage</span></div>
<div class="g"><span class="t" style="left:451.06px;top:243.20px;font-size:12px;line-height:18px;letter-spacing:-0.328px;color:#000;">Excluded</span> <span class="t" style="left:501.96px;top:243.20px;font-size:12px;line-height:18px;letter-spacing:-0.463px;color:#000;">Batches</span></div>
<div class="g"><span class="t" style="left:452.50px;top:276.20px;font-size:12px;line-height:18px;letter-spacing:-0.547px;color:#333;">Batch</span></div>
<div class="g"><span class="t" style="left:589.50px;top:276.20px;font-size:12px;line-height:18px;letter-spacing:-0.506px;color:#333;">Status</span></div>
<div class="g"><span class="t" style="left:727.06px;top:276.20px;font-size:12px;line-height:18px;letter-spacing:-0.160px;color:#333;">Date</span> <span class="t" style="left:754.76px;top:276.20px;font-size:12px;line-height:18px;letter-spacing:-0.121px;color:#333;">Created</span></div>
<div class="g"><span class="t" style="left:864.06px;top:276.20px;font-size:12px;line-height:18px;letter-spacing:-0.355px;color:#333;">User</span> <span class="t" style="left:891.16px;top:276.20px;font-size:12px;line-height:18px;letter-spacing:-0.187px;color:#333;">Created</span></div>
</div>
<div class="a" style="left:5px;top:575px;width:421px;height:1px;background:#a3a3a3"></div>
<div class="a" style="left:434px;top:575px;width:577px;height:1px;background:#a3a3a3"></div>
<div class="a" style="left:841px;top:582px;width:75px;height:23px;border:1px solid #acacac;background:linear-gradient(#f2f2f2,#e4e4e4)"></div>
<div class="a" style="left:926px;top:582px;width:75px;height:23px;border:1px solid #acacac;background:linear-gradient(#f2f2f2,#e4e4e4)"></div>
<div class="g"><span class="t" style="left:870.00px;top:585.00px;font-size:12px;line-height:18px;letter-spacing:-0.844px;color:#222;">OK</span></div>
<div class="g"><span class="t" style="left:946.00px;top:585.00px;font-size:12px;line-height:18px;letter-spacing:-0.272px;color:#222;">Cancel</span></div>
</body></html>
